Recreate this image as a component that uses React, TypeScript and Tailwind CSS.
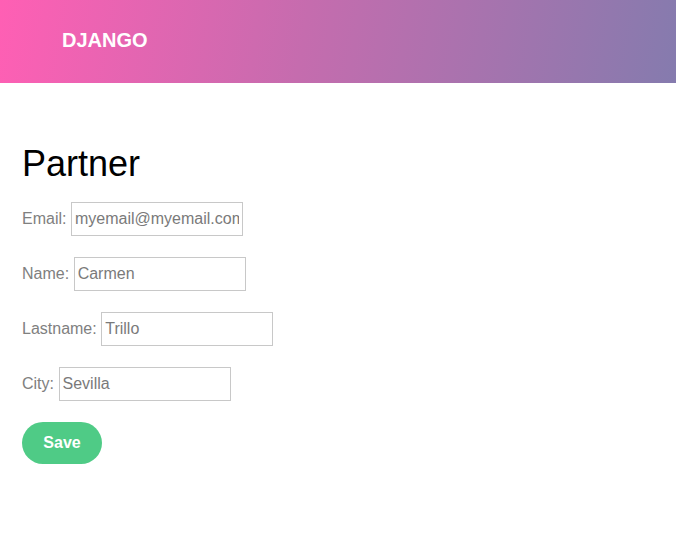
import React from "react";

const rows = [
  { label: "Email:", value: "myemail@myemail.com" },
  { label: "Name:", value: "Carmen" },
  { label: "Lastname:", value: "Trillo" },
  { label: "City:", value: "Sevilla" },
];

export default function App() {
  return (
    <div className="min-h-[540px] bg-white font-['Liberation_Sans',Arial,sans-serif]">
      <header className="h-[83px] flex items-center px-[62px] pb-[4px] bg-[linear-gradient(100deg,#ff5fb4_0%,#c56cae_45%,#857bae_100%)]">
        <span className="text-white font-bold text-[20px] leading-none">DJANGO</span>
      </header>
      <main className="px-[22px] pt-[61px]">
        <h1 className="text-[36px] leading-[40px] text-black font-normal">Partner</h1>
        <form className="mt-[18px] flex flex-col gap-[21px]" onSubmit={(e) => e.preventDefault()}>
          {rows.map((r) => (
            <div key={r.label} className="flex items-center h-[34px] gap-[4.5px]">
              <label className="text-[16px] text-[#808080]">{r.label}</label>
              <input
                readOnly
                value={r.value}
                className="w-[172px] h-[34px] border border-[#c8c8c8] px-[3px] text-[16px] text-[#7a7a7a] outline-none bg-white"
              />
            </div>
          ))}
          <div>
            <button
              type="submit"
              className="w-[80px] h-[42px] rounded-full bg-[#4fcb86] text-white font-bold text-[16px]"
            >
              Save
            </button>
          </div>
        </form>
      </main>
    </div>
  );
}
